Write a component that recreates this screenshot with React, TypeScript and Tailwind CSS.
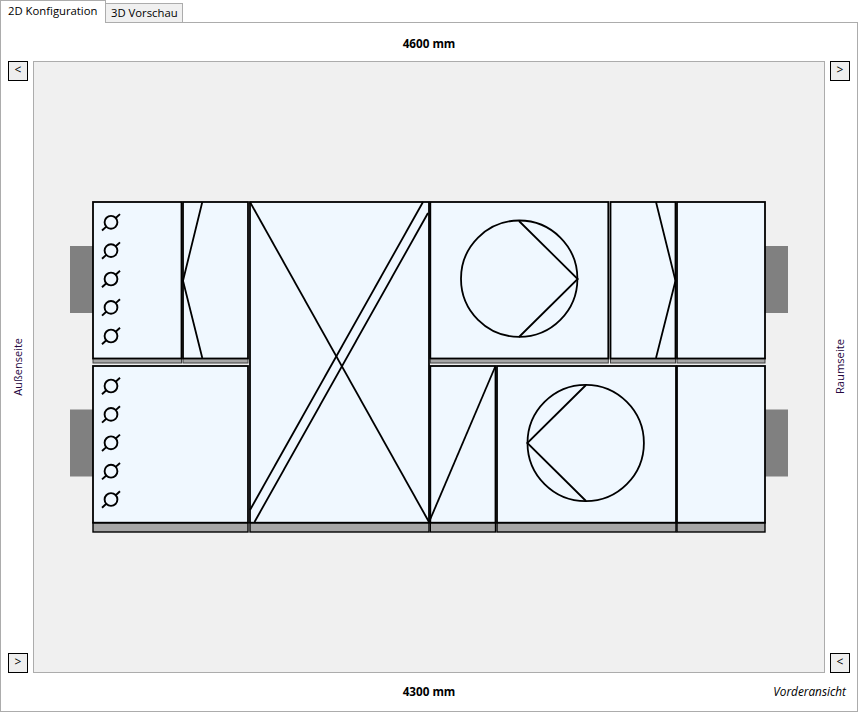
const font = "font-['Open_Sans',sans-serif]";

function SideButton({ label }: { label: string }) {
  return (
    <button className="flex h-5 w-5 items-center justify-center border border-black bg-[#eeeeee] pb-[2px] text-[12px] leading-none text-black">
      {label}
    </button>
  );
}

// circle with two short stubs, the blade does not cross the inside
function Damper({ x, y }: { x: number; y: number }) {
  return (
    <g strokeWidth={1.9}>
      <circle cx={x} cy={y} r={6.4} />
      <line x1={x - 9} y1={y + 8.2} x2={x - 4.7} y2={y + 4.3} />
      <line x1={x + 4.7} y1={y - 4.3} x2={x + 9} y2={y - 8.2} />
    </g>
  );
}

// x, width, top, bottom of the casing sections
const sections = [
  [93, 88.5, 202, 363],
  [183, 65, 202, 363],
  [250, 179, 202, 532],
  [430.3, 178, 202, 363],
  [610.5, 65, 202, 363],
  [677, 88, 202, 363],
  [93, 155, 366, 532],
  [430.3, 65.2, 366, 532],
  [497, 179, 366, 532],
  [677, 88, 366, 532],
];

function Diagram() {
  return (
    <svg viewBox="34 62 790 610" className="h-[610px] w-[790px]" fill="none" stroke="#000000" strokeWidth={1.8}>
      <rect x={70} y={246} width={23} height={67} fill="#808080" stroke="none" />
      <rect x={70} y={409.5} width={23} height={67} fill="#808080" stroke="none" />
      <rect x={765} y={246} width={23} height={67} fill="#808080" stroke="none" />
      <rect x={765} y={409.5} width={23} height={67} fill="#808080" stroke="none" />

      {sections.map(([x, w, top, bottom], i) => {
        const lower = bottom > 400;
        const barTop = lower ? 522.7 : 358.5;
        return (
          <g key={i}>
            <rect
              x={x}
              y={barTop}
              width={w}
              height={bottom - barTop}
              fill="#a6a6a6"
              stroke={lower ? "#000000" : "#404040"}
              strokeWidth={lower ? 1.4 : 1}
            />
            <rect x={x} y={top} width={w} height={barTop - top} fill="#f0f8ff" />
          </g>
        );
      })}

      {[222.3, 250.6, 279, 307.4, 336].map((y) => (
        <Damper key={y} x={111} y={y} />
      ))}
      {[386, 414.4, 442.8, 471.2, 499.5].map((y) => (
        <Damper key={y} x={111} y={y} />
      ))}

      <polyline points="202.3,202 183,280.7 202.3,358" />
      <polyline points="656,202 675.5,280.7 656,358" />

      <line x1={250} y1={202} x2={429} y2={522} />
      <line x1={250} y1={510} x2={423} y2={202} />
      <line x1={254.5} y1={522} x2={428} y2={213} />
      <polyline points="429.5,521 495.5,366" />

      <circle cx={519.2} cy={278.7} r={58.2} />
      <polyline points="519,221 577.7,279 519,337" />
      <circle cx={585.7} cy={443} r={58.2} />
      <polyline points="586,385 527.3,443 586,501" />
    </svg>
  );
}

export default function App() {
  return (
    <div className={`flex h-[712px] w-[858px] flex-col overflow-hidden bg-white text-black ${font}`}>
      <div className="flex h-[22px] items-end text-[11.3px]">
        <div className="relative z-10 -mb-px flex h-[23px] w-[106px] items-center border-x border-t border-[#acacac] bg-white pb-[2px] pl-[7px]">
          2D Konfiguration
        </div>
        <div className="-mb-px -ml-px flex h-[20px] w-[78px] items-center border border-[#acacac] bg-[#f0f0f0] pl-[5px]">
          3D Vorschau
        </div>
      </div>

      <div className="grid h-[690px] grid-cols-[32px_792px_32px] grid-rows-[38px_612px_38px] border border-[#acacac] text-[11.7px]">
        <div className="col-start-2 flex items-center justify-center pt-[4px] font-bold">4600 mm</div>

        <div className="col-start-1 row-start-2 flex flex-col items-start justify-between pl-[7px]">
          <SideButton label="<" />
          <span className="ml-[2px] rotate-180 text-[11px] text-[#25063f] [writing-mode:vertical-rl]">Außenseite</span>
          <SideButton label=">" />
        </div>

        <div className="col-start-2 row-start-2 border border-[#acacac] bg-[#f0f0f0]">
          <Diagram />
        </div>

        <div className="col-start-3 row-start-2 flex flex-col items-start justify-between pl-[5px]">
          <SideButton label=">" />
          <span className="ml-[2px] rotate-180 text-[11.2px] text-[#25063f] [writing-mode:vertical-rl]">Raumseite</span>
          <SideButton label="<" />
        </div>

        <div className="col-span-3 row-start-3 grid grid-cols-[1fr_auto_1fr] items-center">
          <span className="col-start-2 font-bold">4300 mm</span>
          <span className="justify-self-end pr-[11px] text-[11.8px] italic">Vorderansicht</span>
        </div>
      </div>
    </div>
  );
}
